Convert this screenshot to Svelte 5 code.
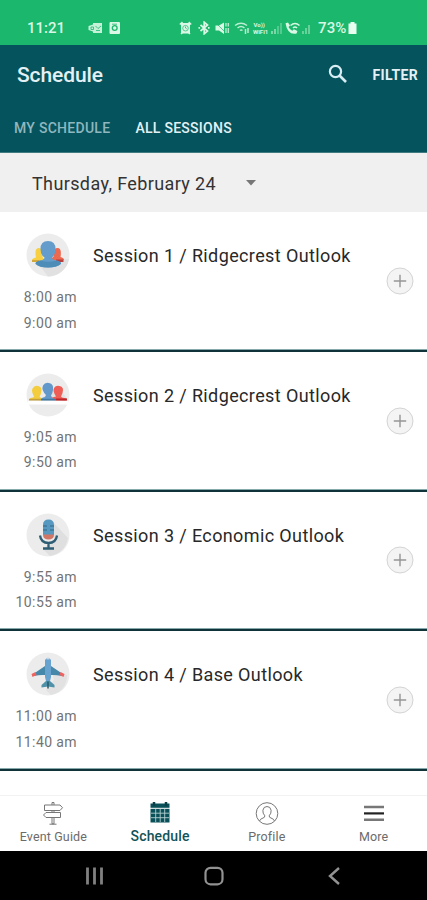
<script lang="ts">
	type Icon = 'people' | 'group' | 'mic' | 'plane';

	interface Session {
		title: string;
		start: string;
		end: string;
		icon: Icon;
	}

	const sessions: Session[] = [
		{ title: 'Session 1 / Ridgecrest Outlook', start: '8:00 am', end: '9:00 am', icon: 'people' },
		{ title: 'Session 2 / Ridgecrest Outlook', start: '9:05 am', end: '9:50 am', icon: 'group' },
		{ title: 'Session 3 / Economic Outlook', start: '9:55 am', end: '10:55 am', icon: 'mic' },
		{ title: 'Session 4 / Base Outlook', start: '11:00 am', end: '11:40 am', icon: 'plane' }
	];

	const navItems = ['Event Guide', 'Schedule', 'Profile', 'More'];
	const tabs = ['MY SCHEDULE', 'ALL SESSIONS'];

	let activeTab = $state('ALL SESSIONS');
	let activeNav = $state('Schedule');
</script>

<div class="phone">
	<div class="status">
		<span class="clock">11:21</span>
		<svg class="notices" width="34" height="14" viewBox="0 0 34 14" fill="#d9f7e4">
			<path d="M.5 5L5 3.500V2h9v10H5v-1.500L.5 9z" opacity=".9" />
			<path d="M3 6h2.500v2.500H3zM7.500 5l2.500 2.500L13 5M8 9.500h4" fill="none" stroke="#1ab76c" stroke-width=".8" />
			<rect x="21.500" y="1" width="10.500" height="12" rx="1" />
			<circle cx="26.700" cy="7" r="2.400" fill="none" stroke="#1ab76c" stroke-width="1.300" />
			<path d="M24 3.200h5" stroke="#1ab76c" stroke-width=".8" />
		</svg>
		<svg class="signals" width="134" height="14" viewBox="0 0 134 14" fill="#d9f7e4">
			<!-- alarm -->
			<path d="M2 2h9v10.500H2z" />
			<path d="M.8 3.500L3.500 1M9.700 1l2.500 2.500M2 13l1.500-1.500M11 13l-1.500-1.500" stroke="#d9f7e4" stroke-width="1.500" />
			<circle cx="6.500" cy="7.200" r="2.800" fill="none" stroke="#1ab76c" stroke-width=".7" />
			<path d="M6.500 5.500V7l1.200.8" fill="none" stroke="#1ab76c" stroke-width=".8" />
			<!-- bluetooth -->
			<path d="M21.500 4l7 6-3.300 2.800V1.200L28.500 4l-7 6" fill="none" stroke="#d9f7e4" stroke-width="1.700" />
			<path d="M19.500 6h1.600v1.800h-1.600zM29 6h1.600v1.800H29z" />
			<!-- muted speaker -->
			<path d="M36.500 4.500h3.500L45 1.500v11.500L40 9.500h-3.500z" />
			<path d="M37 2l10 10" stroke="#1ab76c" stroke-width=".7" />
			<path d="M47 2v3.500M47 7v5M49.300 2v3.500M49.300 7v5" stroke="#d9f7e4" stroke-width="1.400" opacity=".8" />
			<!-- wifi -->
			<g fill="none" stroke="#d9f7e4" stroke-width="1.500" opacity=".85">
				<path d="M56 4.500q6-4.500 12 0M58.500 7q3.500-3 7 0M61 9.500q1.200-1 2.500 0" />
				<path d="M66.500 8v5M69 7v5" />
			</g>
			<!-- VoLTE, first SIM -->
			<text x="74.500" y="6.300" class="tiny">Vo))</text>
			<text x="74" y="12.800" class="tiny">WiFi1</text>
			<g opacity=".5">
				<path d="M92 10h2v3h-2zM95 8h2v5h-2z" />
				<path d="M98 5h2v8h-2zM101 2h2v11h-2z" opacity=".6" />
			</g>
			<!-- wifi calling -->
			<path
				d="M106.500 2.200l2.500-.7 2 3-1.500 1.600q1.300 2.600 3.800 3.700l1.600-1.500 3.500 1.600-.8 2.600q-9 2-11.100-10.300z"
			/>
			<path d="M111.500 4.500q4.500-4 9 0M114 7q2-2 4 0" fill="none" stroke="#d9f7e4" stroke-width="1.500" />
			<g opacity=".4">
				<path d="M123 10h2v3h-2zM126 7h2v6h-2zM129 4h2v9h-2z" />
			</g>
		</svg>
		<span class="charge">73%</span>
		<svg class="battery" width="9" height="12" viewBox="0 0 9 12" fill="#e8fff0">
			<path d="M2.500 0h4v1.500h2V12H.5V1.500h2z" />
		</svg>
	</div>

	<header>
		<div class="toolbar">
			<h1>Schedule</h1>
			<button class="search" aria-label="Search">
				<svg width="22" height="22" viewBox="0 0 22 22" fill="none" stroke="#d8edf3" stroke-width="2.200">
					<circle cx="8.500" cy="7.500" r="5.600" />
					<path d="M12.500 11.500L19 18" stroke-width="2.700" />
				</svg>
			</button>
			<button class="filter">FILTER</button>
		</div>
		<div class="tabs">
			{#each tabs as tab (tab)}
				<button class="tab" class:active={tab === activeTab} onclick={() => (activeTab = tab)}>
					{tab}
				</button>
			{/each}
		</div>
	</header>

	<div class="date">
		<span>Thursday, February 24</span>
		<svg width="12" height="6" viewBox="0 0 12 6" fill="#777"><path d="M1 0h10L6 5.500z" /></svg>
	</div>

	<main>
		{#each sessions as session (session.title)}
			<article class="session">
				<div class="when">
					<svg class="badge" width="44" height="44" viewBox="0 0 44 44">
						<circle cx="22" cy="22" r="21.500" fill="#ececec" />
						{#if session.icon === 'people'}
							<path d="M22 43.500A21.500 21.500 0 0 0 43 26L32 27 14 33z" fill="#e1e1e1" />
							<path d="M6 28.500V27q0-1.500 4-2.500-2-9.500 3-9.500 3.500 0 3.500 9l3 4z" fill="#f7cf40" />
							<path d="M26 28v-3l2-2q-1-8 3.500-8 4.500 0 3 9 3.500 1 3.500 3z" fill="#ed6950" />
							<path d="M6 27h7v2H6z" fill="#d3a83b" />
							<path d="M30 26.500h7.500v2.500H30z" fill="#b8403c" />
							<path
								d="M14.500 16q0-8 7.500-8t7.500 8q0 6-3.500 8.500 0 2 4 3 5 1 5 3.500-4 3.500-13 3.500T9.500 31q0-2.500 5-3.500 4-1 4-3-4-2.500-4-8.500z"
								fill="#649ccb"
							/>
							<path d="M9.500 30.500q0-2 5-3 8 2.500 15.500 0 5 1 5 3-4 4-13 4t-12.500-4z" fill="#4d8db8" />
						{:else if session.icon === 'group'}
							<path d="M2 28h40v3.500H2z" fill="#fff" />
							<path d="M32 13l9 13-3 2H12z" fill="#e0e0e0" />
							<path d="M3 27q0-2 4-2.500l1-1Q5 18 6.500 15.500 8.500 12 12 13q5 1 3 7-.5 3-1.500 3.500l1 1 4 2.500z" fill="#f3cd3e" />
							<path d="M26 27v-2.500l4-1Q26.500 18 28 15q2-3 5.500-2 5 1 3 7l-1.500 3.500 1 1 4.500 1v2z" fill="#ef5e56" />
							<path d="M15 27q0-2.500 4-3l1-2q-5-5-3-9.500 2-3.500 6-2.500 5 1 4 7-.5 4-2 5.500l1 2 4 2.500z" fill="#6399ca" />
							<path d="M3 25.800h12v1.700H3z" fill="#c5a03c" />
							<path d="M15 25.800h15v1.700H15z" fill="#3f79a4" />
							<path d="M30 25.500h11v2H30z" fill="#bd2428" />
						{:else if session.icon === 'mic'}
							<path d="M28 10l14 15q-3 15-18 18l-7-7 11-9z" fill="#dfdfdf" />
							<path d="M17 12q0-5.500 5.500-5.500T28 12v10H17z" fill="#5798c1" />
							<path d="M17 13h4M17 17h4M24 13h4M24 17h4" stroke="#316786" />
							<path d="M17 21.500h11q0 5-5.500 5t-5.500-5z" fill="#cf7667" />
							<path
								d="M14 22.500q1 7.500 8.500 7.500t8.500-7.500M22.500 30v5M17 35.500h11"
								fill="none"
								stroke="#2e5d74"
								stroke-width="2.300"
							/>
						{:else}
							<path d="M25 16l16 7q0 16-16 20l-5-5 8-10z" fill="#e2e2e2" />
							<path d="M8 21.500L19 14h6l11 7.500V24q-7-1.500-11-1h-6q-5-.5-11 1z" fill="#4588a9" />
							<path d="M5.500 22l4-2 1 3-4 2zM38.500 22l-4-2-1 3 4 2z" fill="#ef635e" />
							<path d="M19 8q3-4.500 6 0v17l-2 8h-2l-2-8z" fill="#68a3d0" />
							<path d="M20.500 6.800h3" stroke="#eee" />
							<path d="M15.500 33l4.500-4h4l4.500 4v2.500l-6.500-1-6.500 1z" fill="#4e91a9" />
							<path d="M22 29.500v7" stroke="#255b68" stroke-width="1.500" />
						{/if}
					</svg>
					<time>{session.start}</time>
					<time>{session.end}</time>
				</div>
				<h2>{session.title}</h2>
				<button class="add" aria-label="Add {session.title}">
					<svg width="28" height="28" viewBox="0 0 28 28">
						<circle cx="14" cy="14" r="13" fill="#f4f4f4" stroke="#d4d4d4" />
						<path d="M14 7.800v12.400M7.800 14h12.400" stroke="#959595" stroke-width="1.400" />
					</svg>
				</button>
			</article>
		{/each}
	</main>

	<nav>
		{#each navItems as item (item)}
			<button class="nav-item" class:active={item === activeNav} onclick={() => (activeNav = item)}>
				<svg width="26" height="26" viewBox="0 0 26 26" fill="none" stroke="#777">
					{#if item === 'Event Guide'}
						<path d="M12 4V1.500h2V4M12 9.500v2M14 9.500v2M12 16.500v6.300h2v-6.300M9.500 23.200h7" />
						<path d="M4.500 4h15.500L22.500 6.700 20 9.500H4.500zM6 11.500h14.500v5H6L3.500 14z" />
					{:else if item === 'Schedule'}
						<path d="M3.500 2.500h19V21.500h-19z" fill="#0a5058" stroke="none" />
						<path d="M7 1v4M19 1v4" stroke="#0a4048" stroke-width="2.500" />
						<path d="M3 7.300h20" stroke="#fff" />
						<path d="M4 12.200h18M4 16.700h18M8.700 8v13M13.200 8v13M17.700 8v13" stroke="#b5d0d2" stroke-width=".9" />
					{:else if item === 'Profile'}
						<circle cx="13" cy="12.500" r="10.800" />
						<path
							d="M5.500 20q.5-2 3.500-3 2-.5 1.800-2.200-2.300-2.500-1.900-5.600Q9.500 5.500 13 5.500t4.100 3.700q.4 3.100-1.900 5.600-.2 1.700 1.800 2.200 3 1 3.500 3"
						/>
					{:else}
						<path d="M3 6h20M3 18.800h20" stroke-width="2.400" />
						<path d="M3 12.400h20" stroke="#222" stroke-width="2.200" />
					{/if}
				</svg>
				<span>{item}</span>
			</button>
		{/each}
	</nav>

	<div class="system">
		<svg width="20" height="20" viewBox="0 0 20 20" stroke="#808080" stroke-width="2.800">
			<path d="M3.500 1.500v17M10.500 1.500v17M17.500 1.500v17" />
		</svg>
		<svg width="20" height="20" viewBox="0 0 20 20" fill="none" stroke="#929292" stroke-width="2.200">
			<rect x="1.500" y="1.800" width="17" height="16.500" rx="5" />
		</svg>
		<svg width="20" height="20" viewBox="0 0 20 20" fill="none" stroke="#929292" stroke-width="2.400">
			<path d="M15 2l-9 8 9 8" />
		</svg>
	</div>
</div>

<style>
	.phone {
		display: flex;
		flex-direction: column;
		width: 427px;
		height: 900px;
		overflow: hidden;
		background: #fff;
		font-family: Roboto, 'Liberation Sans', sans-serif;
	}

	button {
		padding: 0;
		border: 0;
		background: none;
		color: inherit;
		font: inherit;
	}

	svg {
		display: block;
		flex: none;
	}

	h1,
	h2 {
		margin: 0;
		white-space: nowrap;
	}

	.status {
		display: flex;
		align-items: center;
		box-sizing: border-box;
		height: 45px;
		padding: 11px 0 0 27px;
		background: #1ab76c;
		color: #d9f7e4;
		font-size: 15px;
		font-weight: 500;
	}

	.clock {
		width: 61px;
	}

	.signals {
		margin-left: 57px;
	}

	.tiny {
		font-size: 6px;
		font-weight: 700;
	}

	.charge {
		width: 29px;
		margin-left: 5px;
		letter-spacing: 0.1px;
	}

	.battery {
		margin-left: 1px;
	}

	header {
		box-sizing: border-box;
		height: 108px;
		border-bottom: 1px solid #407b80;
		background: #05535c;
		color: #e3f1f5;
	}

	.toolbar {
		display: flex;
		align-items: center;
		height: 59px;
		padding: 0 9px 0 17px;
	}

	h1 {
		flex: 1;
		font-size: 21px;
		font-weight: 500;
		letter-spacing: -0.1px;
	}

	.search {
		margin-right: 24px;
	}

	.filter {
		font-size: 14px;
		font-weight: 700;
		letter-spacing: 0.35px;
	}

	.tabs {
		display: flex;
		gap: 25px;
		height: 48px;
		padding-left: 14px;
	}

	.tab {
		color: #8fb7bf;
		font-size: 14px;
		font-weight: 500;
		letter-spacing: 0.28px;
	}

	.tab.active {
		color: #e3f1f5;
	}

	.date {
		display: flex;
		align-items: center;
		gap: 29px;
		height: 59px;
		padding: 1px 32px 0;
		box-sizing: border-box;
		background: #f0f0f0;
		color: #333;
		font-size: 18px;
		letter-spacing: 0.38px;
	}

	main {
		height: 583px;
		overflow: hidden;
	}

	.session {
		display: flex;
		box-sizing: border-box;
		height: 139.75px;
		border-bottom: 2px solid #0f3338;
		box-shadow: inset 0 -1px #86a9ac;
	}

	.when {
		display: flex;
		flex-direction: column;
		align-items: flex-end;
		width: 77px;
		padding-top: 21px;
		color: #737373;
		font-size: 14px;
		letter-spacing: 0.4px;
	}

	.badge {
		margin: 0 7px 7px 0;
	}

	time {
		height: 25.500px;
		line-height: 26px;
	}

	h2 {
		flex: 1;
		padding: 33px 0 0 16px;
		color: #282828;
		font-size: 18px;
		font-weight: 400;
		line-height: 22px;
		letter-spacing: 0.38px;
	}

	.add {
		align-self: center;
		margin-right: 13px;
	}

	nav {
		display: grid;
		grid-template-columns: repeat(4, 1fr);
		box-sizing: border-box;
		height: 56px;
		border-top: 1px solid #f2f2f2;
	}

	.nav-item {
		display: flex;
		flex-direction: column;
		align-items: center;
		padding-top: 5px;
		color: #6b6b6b;
		font-size: 12.500px;
		letter-spacing: 0.15px;
	}

	.nav-item span {
		line-height: 19px;
	}

	.nav-item.active {
		color: #125359;
		font-size: 14px;
		font-weight: 500;
	}

	.nav-item.active span {
		line-height: 18px;
	}

	.system {
		display: flex;
		flex: 1;
		align-items: center;
		justify-content: center;
		gap: 100px;
		padding-top: 1px;
		background: #000;
	}
</style>
